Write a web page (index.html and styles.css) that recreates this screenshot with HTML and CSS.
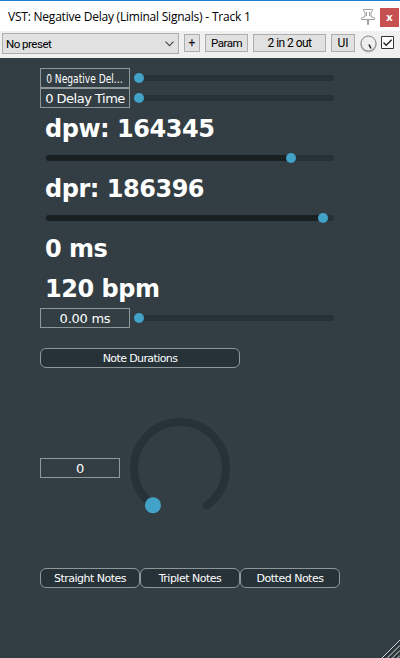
FILE: index.html
```html
<!DOCTYPE html>
<html lang="en">
<head>
<meta charset="utf-8">
<title>VST: Negative Delay (Liminal Signals) - Track 1</title>
<link rel="stylesheet" href="styles.css">
</head>
<body>
<div class="window">
  <header class="titlebar">
    <span class="title">VST: Negative Delay (Liminal Signals) - Track 1</span>
    <svg class="pin" width="14" height="17" viewBox="0 0 14 17" fill="none" stroke="#a0a0a0"><path d="M2.500 .5h9v1.500l-1.500 1v4.500l3.500 1.500v1.500H.5V9L4 7.500V3L2.500 2zM5.500 3v4M8.500 3v4M6.500 10.500v5h1v-5"/></svg>
    <span class="close">x</span>
  </header>
  <nav class="toolbar">
    <div class="preset"><span>No preset</span>
      <svg width="9" height="6" viewBox="0 0 9 6" fill="none" stroke="#444" stroke-width="1.1"><path d="M.5 .7l4 4 4-4"/></svg>
    </div>
    <span class="btn plus">+</span>
    <span class="btn param">Param</span>
    <span class="btn io">2 in 2 out</span>
    <span class="btn ui">UI</span>
    <svg class="wet" width="17" height="18" viewBox="0 0 17 18"><circle cx="8.500" cy="9.300" r="7.500" fill="none" stroke="#bbb" stroke-width="1.500"/><circle cx="8.500" cy="8.500" r="7.500" fill="#eee" stroke="#858585"/><path d="M9 9.500l2 4" stroke="#111" stroke-width="1.400"/></svg>
    <svg class="check" width="13" height="13" viewBox="0 0 13 13"><path d="M.5 .5h12v12H.5z" fill="#fff" stroke="#333"/><path d="M2.500 6.500l2.700 2.800 5.500-5.600" fill="none" stroke="#222" stroke-width="1.300"/></svg>
  </nav>
  <main class="panel">
    <div class="row"><span class="value"><span class="squeeze">0 Negative Del…</span></span><div class="slider"><i class="thumb"></i></div></div>
    <div class="row"><span class="value delay">0 Delay Time</span><div class="slider"><i class="thumb"></i></div></div>
    <div class="label">dpw: 164345</div>
    <div class="row"><div class="slider full"><i class="fill write"></i><i class="thumb"></i></div></div>
    <div class="label">dpr: 186396</div>
    <div class="row"><div class="slider full"><i class="fill read"></i><i class="thumb"></i></div></div>
    <div class="label">0 ms</div>
    <div class="label">120 bpm</div>
    <div class="row"><span class="value">0.00 ms</span><div class="slider"><i class="thumb"></i></div></div>
    <div class="pill durations">Note Durations</div>
    <div class="dial-row">
      <span class="value short">0</span>
      <svg class="dial" width="120" height="120" viewBox="0 0 120 120"><path d="M32.960 97.220A46 46 0 1 1 87.040 97.220" fill="none" stroke="#263238" stroke-width="8" stroke-linecap="round"/><circle cx="32.960" cy="97.220" r="8" fill="#42a2c8"/></svg>
    </div>
    <div class="notes"><span class="pill">Straight Notes</span><span class="pill">Triplet Notes</span><span class="pill">Dotted Notes</span></div>
    <svg class="grip" width="18" height="18" viewBox="0 0 18 18" stroke-width="1"><path d="M0 18L18 0M5.500 18L18 5.500M10.500 18L18 10.500M15.500 18l2.500-2.500" stroke="#d5d8d9"/><path d="M1.500 18L18 1.500M7 18L18 7M12 18l6-6" stroke="#1c2225"/></svg>
  </main>
</div>
</body>
</html>
```
FILE: styles.css
```css
* { box-sizing: border-box; }
body { margin: 0; }
svg { display: block; flex: none; }
.window { width: 400px; height: 658px; display: flex; flex-direction: column; overflow: hidden; background: #333e44; }
.titlebar { height: 31px; flex: none; display: flex; align-items: flex-start; background: #fff; border-top: 1px solid #1a7fd4; font: 12px/31px "Open Sans", sans-serif; color: #000; }
.title { width: 352px; padding-left: 8px; white-space: nowrap; letter-spacing: -.22px; }
.pin { margin: 8px 5px 0 9px; }
.close { width: 19px; height: 19px; margin-top: 7px; background: #c75050; color: #fff; text-align: center; font: bold 11px/17px "Open Sans", sans-serif; }
.toolbar { height: 27px; flex: none; display: flex; align-items: flex-start; padding: 2px 0 0 2px; background: #f0f0f0; font: 12px/17px Roboto, sans-serif; color: #000; }
.preset { width: 177px; height: 21px; display: flex; align-items: center; justify-content: space-between; padding: 1px 4px 0 3px; background: #e1e1e1; border: 1px solid #adadad; font-size: 11.5px; letter-spacing: -.5px; }
.btn { height: 18px; margin-top: 1px; background: #e1e1e1; border: 1px solid #adadad; text-align: center; line-height: 17px; white-space: nowrap; }
.plus { width: 16px; margin-left: 5px; }
.param { width: 43px; margin-left: 5px; font-size: 11.5px; letter-spacing: -.5px; }
.io { width: 73px; margin-left: 5px; letter-spacing: -.55px; }
.ui { width: 24px; margin-left: 5px; }
.wet { margin: 2px 0 0 5px; }
.check { margin: 3px 0 0 4px; }
.panel { position: relative; flex: 1; padding: 10px 60px 0 40px; color: #fff; font-family: "DejaVu Sans", sans-serif; }
.row { display: flex; height: 20px; }
.value { width: 90px; height: 20px; flex: none; border: 1px solid #8e989b; text-align: center; font-size: 13px; line-height: 19px; white-space: nowrap; letter-spacing: -.25px; }
.delay { letter-spacing: -.5px; }
.squeeze { display: inline-block; font-size: 12px; letter-spacing: 0; transform: scaleX(.76); margin: 0 -15px; }
.short { width: 80px; }
.slider { position: relative; flex: 1; height: 6px; margin: 7px 6px 0; border-radius: 3px; background: #263238; }
.thumb { position: absolute; left: -2px; top: -2px; width: 10px; height: 10px; border-radius: 50%; background: #42a2c8; }
.full { display: flex; }
.full .thumb { position: relative; left: -5px; }
.fill { height: 6px; border-radius: 3px; background: #191f22; }
.write { width: 244.500px; }
.read { width: 276.500px; }
.label { height: 40px; padding-left: 5px; font-size: 24px; line-height: 43px; font-weight: bold; white-space: nowrap; letter-spacing: -.48px; }
.pill { display: block; width: 100px; height: 20px; border: 1px solid #8e989b; border-radius: 6px; background: #263238; text-align: center; font-size: 11px; line-height: 19px; white-space: nowrap; letter-spacing: -.5px; }
.durations { width: 200px; margin-top: 20px; letter-spacing: -.6px; }
.dial-row { height: 120px; margin: 40px 0; display: flex; align-items: center; }
.notes { display: flex; }
.grip { position: absolute; right: 0; bottom: 0; }
```
